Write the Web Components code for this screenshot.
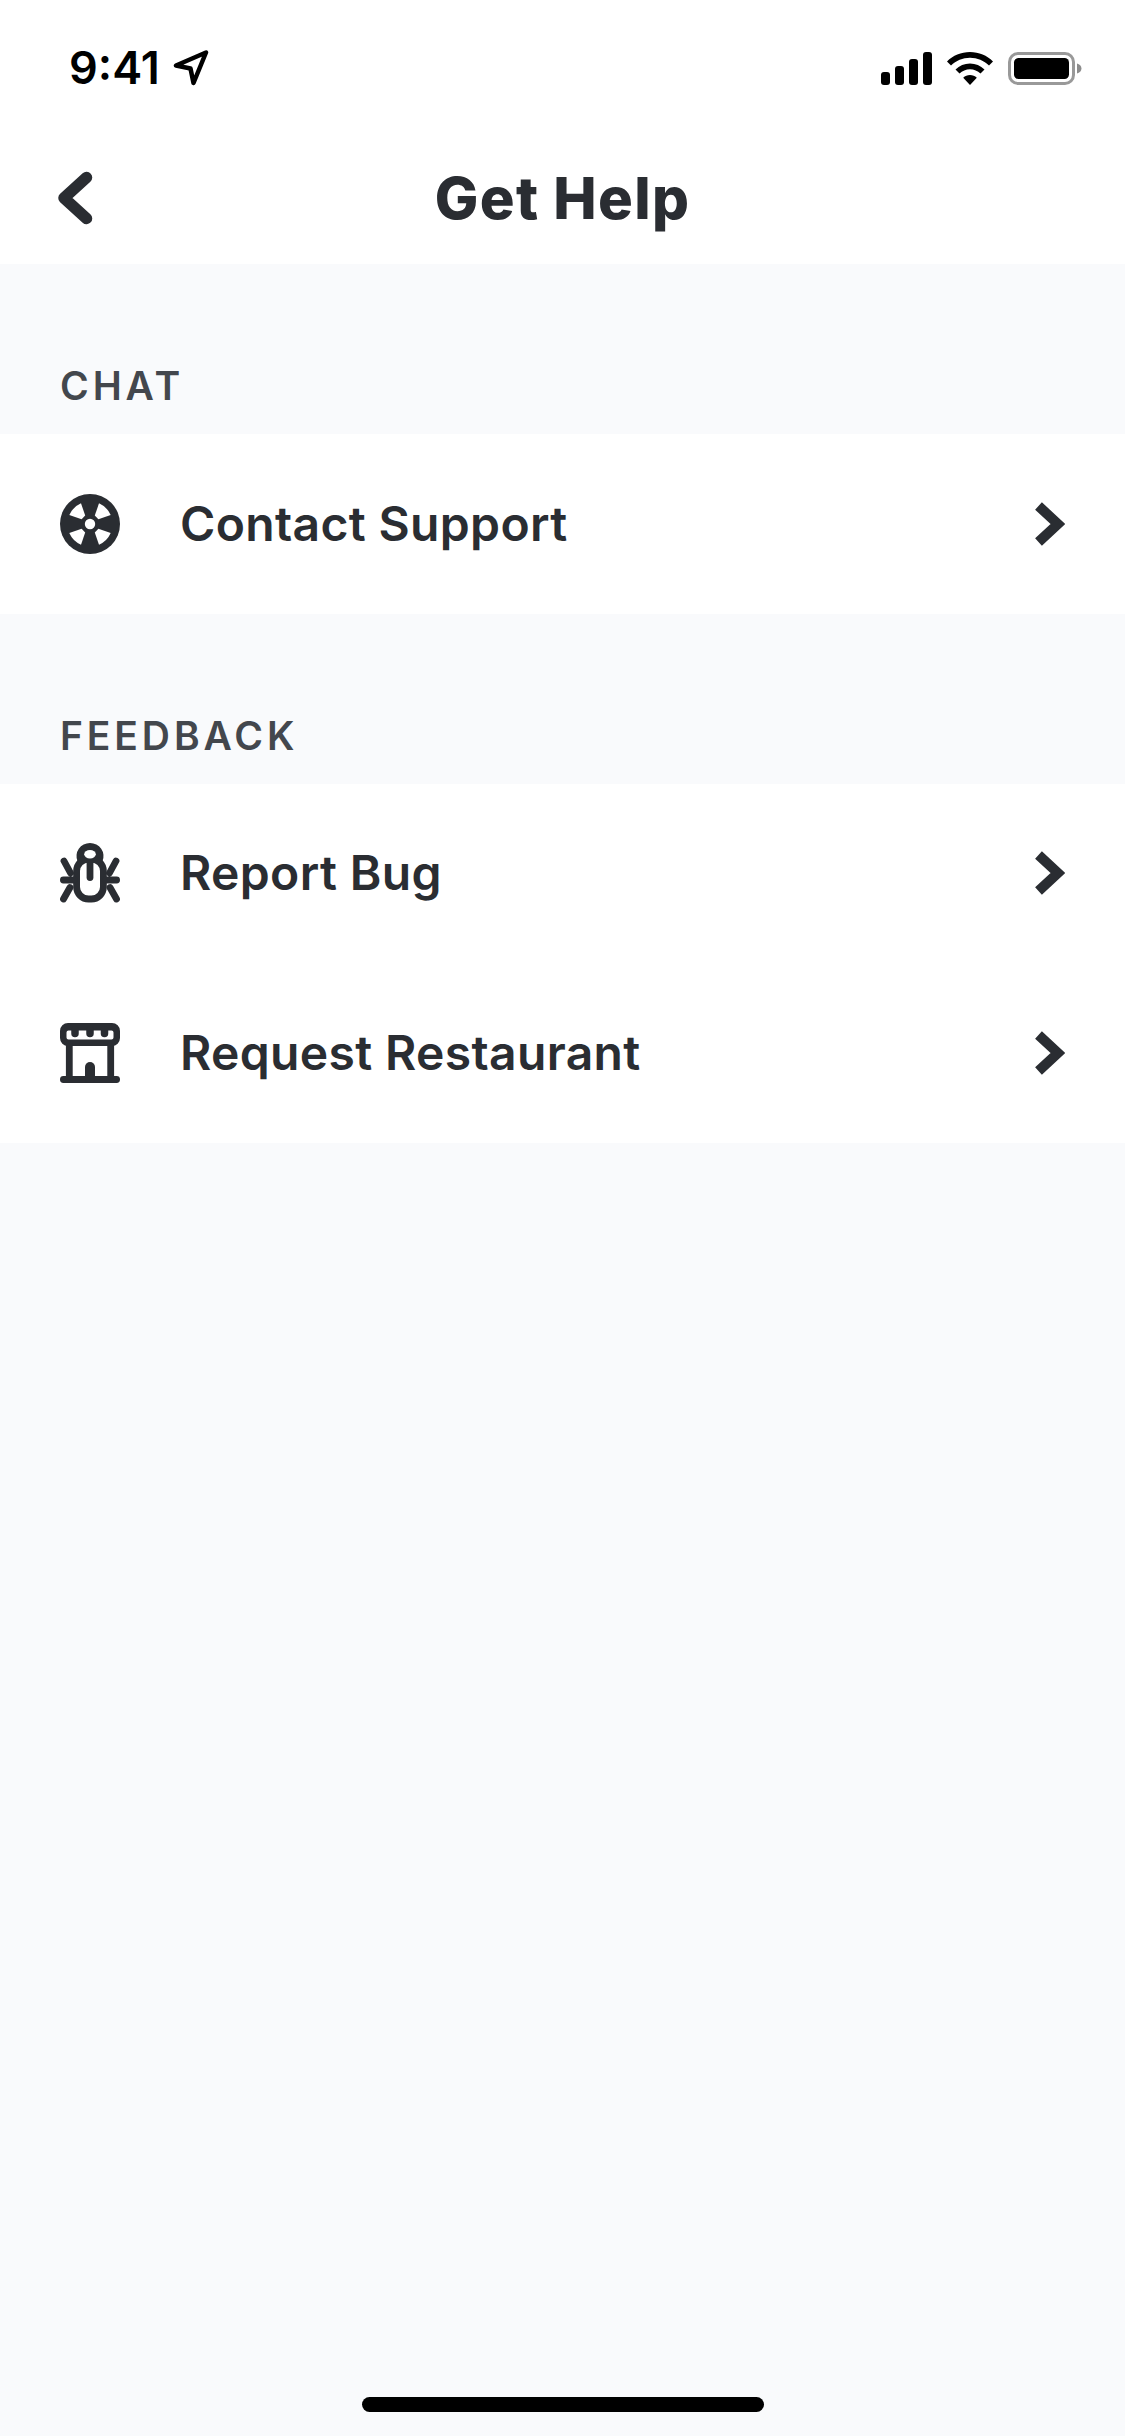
<!DOCTYPE html>
<html lang="en">
<head>
<meta charset="utf-8">
<title>Get Help</title>
<style>
  html, body { margin: 0; padding: 0; }
  body { width: 1125px; height: 2436px; background: #f9fafc; font-family: Inter, "Liberation Sans", sans-serif; }
  app-screen { height: 2436px; }
</style>
</head>
<body>
<app-screen>
  <status-bar slot="top" time="9:41"></status-bar>
  <nav-header slot="top">Get Help</nav-header>
  <section-label>CHAT</section-label>
  <help-group>
    <help-row icon="support">Contact Support</help-row>
  </help-group>
  <section-label>FEEDBACK</section-label>
  <help-group>
    <help-row icon="bug">Report Bug</help-row>
    <help-row icon="store">Request Restaurant</help-row>
  </help-group>
</app-screen>

<script>
const WEDGE = 'M9.3 21A22.6 22.6 0 0 1 21 9.3L25.200 21.600 21.600 25.200Z';

const ICONS = {
  support: `
    <circle cx="30" cy="30" r="30" fill="currentColor"/>
    <circle cx="30" cy="30" r="5.2" fill="#fff"/>
    <g fill="#fff">
      <path d="${WEDGE}"/>
      <path d="${WEDGE}" transform="rotate(90 30 30)"/>
      <path d="${WEDGE}" transform="rotate(180 30 30)"/>
      <path d="${WEDGE}" transform="rotate(270 30 30)"/>
    </g>`,
  bug: `
    <path fill="currentColor" d="M17.500 18A13.500 13 0 1 1 42.500 18Z"/>
    <g fill="none" stroke="currentColor" stroke-width="6.800" stroke-linecap="round" stroke-linejoin="round">
      <rect x="16.600" y="16" width="26.800" height="40" rx="12"/>
      <path d="M30 17V34.500"/>
      <path d="M4 18L10.500 30M3.400 37H14M3.500 56L10 44.500"/>
      <path d="M56 18L49.500 30M56.600 37H46M56.500 56L50 44.500"/>
    </g>
    <ellipse cx="30" cy="11.200" rx="5.800" ry="4.200" fill="#fff"/>`,
  store: `
    <path fill-rule="evenodd" fill="currentColor" d="M8 0H52A8 8 0 0 1 60 8V15A8 8 0 0 1 52 23H8A8 8 0 0 1 0 15V8A8 8 0 0 1 8 0ZM8.500 7.500A2 2 0 0 0 6.500 9.500V14.500A2 2 0 0 0 8.500 16.500H51.500A2 2 0 0 0 53.500 14.500V9.500A2 2 0 0 0 51.500 7.500Z"/>
    <g fill="none" stroke="currentColor" stroke-linecap="round">
      <path stroke-width="7.500" d="M15 7V10.500M30 7V10.500M44.500 7V10.500"/>
      <path stroke-width="6.800" stroke-linecap="butt" d="M9.300 20V56M50.700 20V56"/>
      <path stroke-width="6.800" d="M3.400 56.500H56.600"/>
      <path stroke-width="10" d="M30 44V56"/>
    </g>`
};

class AppScreen extends HTMLElement {
  constructor() {
    super();
    this.attachShadow({ mode: 'open' }).innerHTML = `
      <style>
        :host { display: flex; flex-direction: column; position: relative; background: #f9fafc; overflow: hidden; }
        header { background: #fff; }
        .home {
          position: absolute; left: 362px; bottom: 24px;
          width: 402px; height: 15px; border-radius: 8px; background: #000;
        }
      </style>
      <header><slot name="top"></slot></header>
      <slot></slot>
      <div class="home"></div>`;
  }
}

class StatusBar extends HTMLElement {
  constructor() {
    super();
    this.attachShadow({ mode: 'open' }).innerHTML = `
      <style>
        :host { display: flex; justify-content: space-between; align-items: center; height: 132px; box-sizing: border-box; padding: 4px 43px 0 69px; color: #000; }
        .left { display: flex; align-items: center; gap: 13px; }
        .time { font: 600 45px/52px Inter, "Noto Sans", sans-serif; }
        .right { display: flex; align-items: center; gap: 15px; }
        svg { display: block; }
      </style>
      <div class="left">
        <span class="time">${this.getAttribute('time')}</span>
        <svg width="36" height="36" viewBox="0 0 36 36">
          <path d="M3 15.500L33 2.500 20.500 33 17.500 18.500Z" fill="none" stroke="#000" stroke-width="4.500" stroke-linejoin="round"/>
        </svg>
      </div>
      <div class="right">
        <svg width="51" height="33" viewBox="0 0 51 33" fill="#000">
          <rect x="0" y="20" width="9" height="13" rx="3"/>
          <rect x="14" y="14" width="9" height="19" rx="3"/>
          <rect x="28" y="7" width="9" height="26" rx="3"/>
          <rect x="42" y="0" width="9" height="33" rx="3"/>
        </svg>
        <svg width="46" height="33" viewBox="0 0 46 33" fill="#000">
          <path d="M23 0C32 0 40 3.500 46 9.500L42 13.500C37 8.500 30.300 5.700 23 5.700S9 8.500 4 13.500L0 9.500C6 3.500 14 0 23 0Z"/>
          <path d="M23 11.500C28.700 11.500 33.500 13.600 37.500 17.500L33.500 21.500C30.700 18.800 27 17.200 23 17.200S15.300 18.800 12.500 21.500L8.500 17.500C12.500 13.600 17.300 11.500 23 11.500Z"/>
          <path d="M23 23C25.600 23 28 24 29.800 25.700L23 33 16.200 25.700C18 24 20.400 23 23 23Z"/>
        </svg>
        <svg width="74" height="33" viewBox="0 0 74 33">
          <rect x="1.500" y="1.500" width="64" height="30" rx="8.500" fill="none" stroke="#000" stroke-opacity=".4" stroke-width="3"/>
          <rect x="6" y="6" width="55" height="21" rx="4.500" fill="#000"/>
          <path d="M69 11.500C71.500 12.300 73.500 14 73.500 16.500S71.500 20.700 69 21.500Z" fill="#000" fill-opacity=".45"/>
        </svg>
      </div>`;
  }
}

class NavHeader extends HTMLElement {
  constructor() {
    super();
    this.attachShadow({ mode: 'open' }).innerHTML = `
      <style>
        :host { display: flex; align-items: center; justify-content: center; position: relative; height: 132px; color: #2a2d32; }
        svg { position: absolute; left: 57px; top: 39px; }
        h1 { margin: 0; font: 800 58px/66px Inter, "Liberation Sans", sans-serif; letter-spacing: 1.300px; }
      </style>
      <svg width="36" height="54" viewBox="0 0 36 54">
        <path d="M29.500 6.500L7 27 29.500 47.500" fill="none" stroke="currentColor" stroke-width="11.500" stroke-linecap="round" stroke-linejoin="round"/>
      </svg>
      <h1><slot></slot></h1>`;
  }
}

class SectionLabel extends HTMLElement {
  constructor() {
    super();
    this.attachShadow({ mode: 'open' }).innerHTML = `
      <style>
        :host { display: flex; align-items: flex-end; height: 170px; box-sizing: border-box; padding: 0 60px 25px; color: #43474d; font: 600 39px/46px Inter, "Liberation Sans", sans-serif; letter-spacing: 3.900px; }
      </style>
      <slot></slot>`;
  }
}

class HelpGroup extends HTMLElement {
  constructor() {
    super();
    this.attachShadow({ mode: 'open' }).innerHTML = `
      <style>:host { display: block; background: #fff; }</style>
      <slot></slot>`;
  }
}

class HelpRow extends HTMLElement {
  constructor() {
    super();
    this.attachShadow({ mode: 'open' }).innerHTML = `
      <style>
        :host { display: grid; grid-template-columns: 60px 1fr 30px; align-items: center; height: 179.500px; padding: 0 60px; color: #2a2d32; font: 600 48px/56px Inter, "Liberation Sans", sans-serif; letter-spacing: 0.350px; }
        svg { display: block; }
        .label { padding-left: 60px; }
      </style>
      <svg width="60" height="60" viewBox="0 0 60 60">${ICONS[this.getAttribute('icon')]}</svg>
      <span class="label"><slot></slot></span>
      <svg width="30" height="46" viewBox="0 0 30 46">
        <path d="M3.500 5L23 23 3.500 41" fill="none" stroke="currentColor" stroke-width="10" stroke-linejoin="miter"/>
      </svg>`;
  }
}

customElements.define('app-screen', AppScreen);
customElements.define('status-bar', StatusBar);
customElements.define('nav-header', NavHeader);
customElements.define('section-label', SectionLabel);
customElements.define('help-group', HelpGroup);
customElements.define('help-row', HelpRow);
</script>
</body>
</html>
